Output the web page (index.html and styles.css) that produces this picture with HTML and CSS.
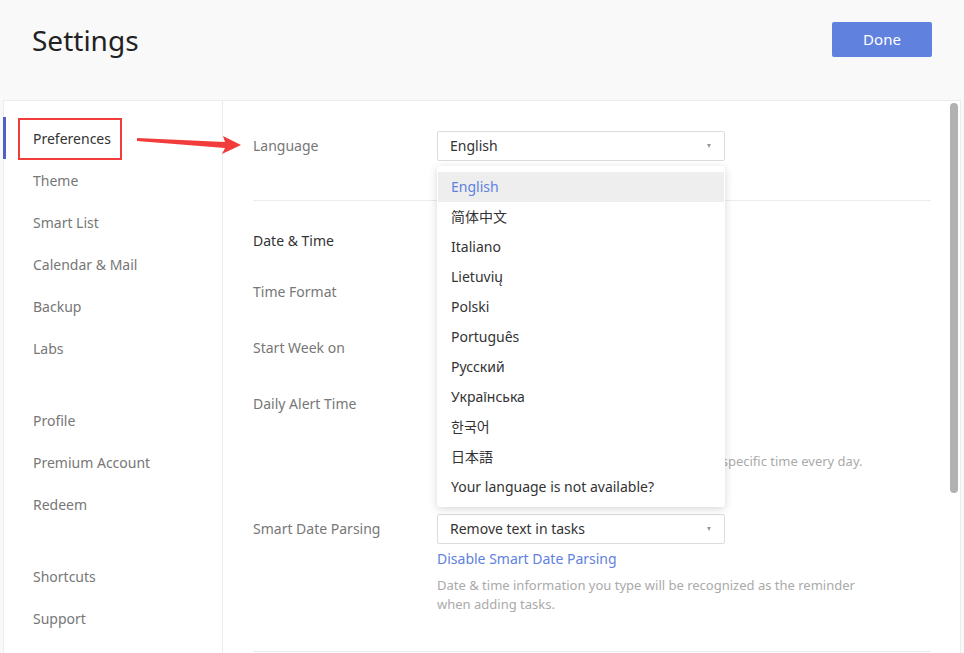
FILE: index.html
```html
<!DOCTYPE html>
<html lang="en">
<head>
<meta charset="utf-8">
<title>Settings</title>
<link rel="stylesheet" href="styles.css">
</head>
<body>
<header class="header">
  <h1 class="title">Settings</h1>
  <button class="done">Done</button>
</header>
<div class="panel">
  <nav class="sidebar">
    <div class="group">
      <div class="nav-item active">Preferences</div>
      <div class="nav-item">Theme</div>
      <div class="nav-item">Smart List</div>
      <div class="nav-item">Calendar &amp; Mail</div>
      <div class="nav-item">Backup</div>
      <div class="nav-item">Labs</div>
    </div>
    <div class="group">
      <div class="nav-item">Profile</div>
      <div class="nav-item">Premium Account</div>
      <div class="nav-item">Redeem</div>
    </div>
    <div class="group">
      <div class="nav-item">Shortcuts</div>
      <div class="nav-item">Support</div>
    </div>
  </nav>
  <main class="content">
    <section class="section first">
      <div class="row">
        <div class="label">Language</div>
        <div class="control">
          <div class="select"><span>English</span><i class="caret"></i></div>
          <ul class="dropdown">
            <li class="opt hover">English</li>
            <li class="opt">简体中文</li>
            <li class="opt">Italiano</li>
            <li class="opt">Lietuvių</li>
            <li class="opt">Polski</li>
            <li class="opt">Português</li>
            <li class="opt">Русский</li>
            <li class="opt">Українська</li>
            <li class="opt" lang="ko">한국어</li>
            <li class="opt" lang="ja">日本語</li>
            <li class="opt">Your language is not available?</li>
          </ul>
        </div>
      </div>
    </section>
    <section class="section mid">
      <div class="heading">Date &amp; Time</div>
      <div class="row">
        <div class="label">Time Format</div>
        <div class="control"><div class="select"><span></span><i class="caret"></i></div></div>
      </div>
      <div class="row">
        <div class="label">Start Week on</div>
        <div class="control"><div class="select"><span></span><i class="caret"></i></div></div>
      </div>
      <div class="row">
        <div class="label">Daily Alert Time</div>
        <div class="control">
          <div class="select"><span></span><i class="caret"></i></div>
          <p class="desc alert-desc">You will receive a reminder of today's tasks at a specific time every day.</p>
        </div>
      </div>
      <div class="row parsing">
        <div class="label">Smart Date Parsing</div>
        <div class="control">
          <div class="select"><span>Remove text in tasks</span><i class="caret"></i></div>
          <a class="link">Disable Smart Date Parsing</a>
          <p class="desc">Date &amp; time information you type will be recognized as the reminder when adding tasks.</p>
        </div>
      </div>
    </section>
    <section class="section"></section>
  </main>
  <div class="scrollbar"></div>
  <div class="annot-box"></div>
  <svg class="annot-arrow" width="110" height="24" viewBox="0 0 110 24">
    <polygon fill="#f23c3c" points="0,3 88,7 86,1 104,10 85,19 88,13 0,6"/>
  </svg>
</div>
</body>
</html>
```

FILE: styles.css
```css
* { box-sizing: border-box; }
html, body { margin: 0; padding: 0; }
body {
  background: #f9f9f9;
  font-family: "Noto Sans", "Noto Sans CJK SC", sans-serif;
  font-size: 14px;
  color: #333;
  width: 964px;
  height: 653px;
  overflow: hidden;
}
.header {
  height: 100px;
  display: flex;
  justify-content: space-between;
  align-items: flex-start;
  padding: 0 32px 0 32px;
}
.title {
  margin: 20px 0 0 0;
  font-size: 28px;
  font-weight: 400;
  line-height: 40px;
  color: #222;
}
.done {
  margin-top: 22px;
  width: 100px;
  height: 35px;
  padding: 0 0 2px 0;
  border: none;
  border-radius: 2px;
  background: #6181de;
  color: #fff;
  font-family: inherit;
  font-size: 15px;
}
.panel {
  position: relative;
  margin-left: 3px;
  width: 958px;
  height: 560px;
  background: #fff;
  border: 1px solid #ececec;
  border-bottom: none;
  display: flex;
}
.sidebar {
  width: 219px;
  flex: none;
  border-right: 1px solid #ececec;
  padding-top: 17px;
  display: flex;
  flex-direction: column;
  gap: 30px;
}
.nav-item {
  height: 42px;
  line-height: 42px;
  padding-left: 29px;
  color: #777;
  position: relative;
}
.nav-item.active { color: #333; }
.nav-item.active::before {
  content: "";
  position: absolute;
  left: -1px;
  top: -1px;
  width: 3px;
  height: 42px;
  background: #4f62c4;
}
.content {
  flex: 1;
  padding: 30px 29px 0 30px;
}
.section {
  border-top: 1px solid #ececec;
  padding: 25px 0 0 0;
}
.section.first {
  border-top: none;
  padding: 0 0 39px 0;
}
.section.mid { padding-bottom: 37px; }
.row {
  display: flex;
  align-items: flex-start;
  margin-top: 26px;
}
.section.first .row { margin-top: 0; }
.heading {
  line-height: 30px;
  color: #333;
}
.heading + .row { margin-top: 21px; }
.label {
  width: 184px;
  flex: none;
  line-height: 30px;
  color: #777;
}
.control {
  position: relative;
  width: 440px;
}
.select {
  width: 288px;
  height: 30px;
  border: 1px solid #dcdcdc;
  border-radius: 2px;
  padding: 0 12px 1px 12px;
  display: flex;
  align-items: center;
  justify-content: space-between;
  color: #333;
}
.caret {
  width: 0;
  height: 0;
  border-left: 2.5px solid transparent;
  border-right: 2.5px solid transparent;
  border-top: 4px solid #999;
  margin-right: 1px;
}
.desc {
  margin: 0;
  font-size: 13px;
  line-height: 19px;
  color: #aaa;
}
.alert-desc {
  margin-top: 33px;
  text-indent: -6px;
  overflow: hidden;
  white-space: nowrap;
}
.parsing { margin-top: 43px; }
.link {
  display: block;
  margin-top: 5px;
  line-height: 20px;
  color: #6181de;
  font-size: 14px;
}
.parsing .desc { margin-top: 7px; }
.dropdown {
  position: absolute;
  top: 35px;
  left: 0;
  width: 288px;
  margin: 0;
  padding: 6px 0 5px 0;
  list-style: none;
  background: #fff;
  border-radius: 3px;
  box-shadow: 0 2px 8px rgba(0, 0, 0, 0.16);
  z-index: 5;
}
.opt {
  height: 30px;
  line-height: 30px;
  padding-left: 13px;
  margin: 0 1px;
  color: #333;
}
.opt.hover {
  background: #eeeeee;
  color: #6181de;
}
.opt[lang="ko"] { font-family: "Noto Sans", "Noto Sans CJK KR", sans-serif; }
.opt[lang="ja"] { font-family: "Noto Sans", "Noto Sans CJK JP", sans-serif; }
.scrollbar {
  position: absolute;
  right: 2px;
  top: 2px;
  width: 8px;
  height: 390px;
  border-radius: 4px;
  background: #b1b1b1;
}
.annot-box {
  position: absolute;
  left: 14px;
  top: 17px;
  width: 104px;
  height: 42px;
  border: 2px solid #f23c3c;
}
.annot-arrow {
  position: absolute;
  left: 133px;
  top: 34px;
}
```
